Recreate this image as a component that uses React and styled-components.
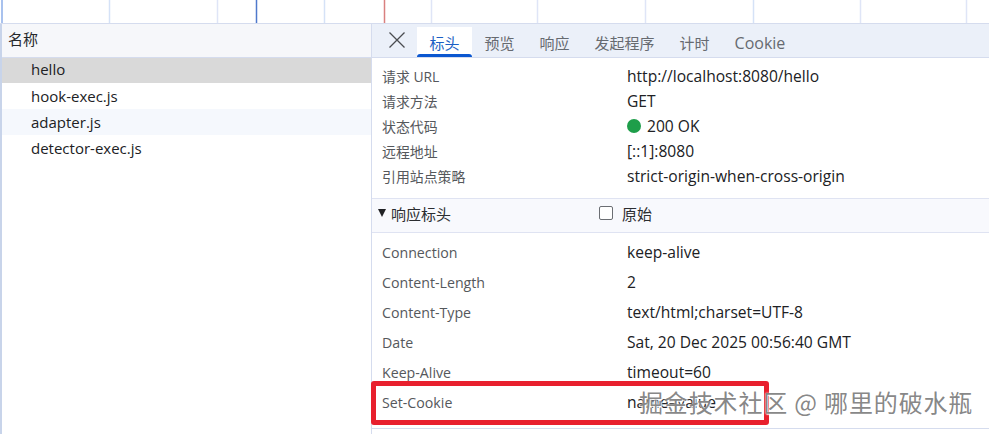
import React from 'react'
import styled, { createGlobalStyle } from 'styled-components'

const GlobalStyle = createGlobalStyle`
  html, body {
    margin: 0;
    padding: 0;
    background: #fff;
  }
  body {
    font-family: 'Open Sans', 'Noto Sans CJK SC', sans-serif;
    overflow: hidden;
  }
`

const Page = styled.div`
  position: relative;
  width: 989px;
  height: 434px;
  overflow: hidden;
  display: flex;
  flex-direction: column;
  color: #303134;
`

const Timeline = styled.svg`
  display: block;
  flex: none;
  width: 989px;
  height: 24px;
`

const Split = styled.div`
  flex: 1;
  display: flex;
  min-height: 0;
  border-left: 2px solid #c8d4ea;
`

const NamePanel = styled.div`
  flex: none;
  width: 369px;
  display: flex;
  flex-direction: column;
`

const NameHeader = styled.div`
  height: 34px;
  box-sizing: border-box;
  padding: 0 0 5px 6px;
  display: flex;
  align-items: center;
  background: #f6f7fa;
  border-bottom: 1px solid #d5dcee;
  font-size: 15px;
  color: #26282b;
`

const FileRow = styled.div`
  height: ${p => (p.$selected ? '25px' : '26px')};
  box-sizing: border-box;
  padding: 0 0 ${p => (p.$selected ? '3px' : '0')} 29px;
  display: flex;
  align-items: center;
  font-size: 15px;
  color: #202124;
  background: ${p => (p.$selected ? '#d9d9d9' : p.$striped ? '#f5f8fd' : '#fff')};
`

const DetailPanel = styled.div`
  flex: 1;
  display: flex;
  flex-direction: column;
  border-left: 1px solid #d5dcee;
  min-width: 0;
`

const TabBar = styled.div`
  height: 34px;
  flex: none;
  box-sizing: border-box;
  display: flex;
  background: #ebf0f9;
  border-bottom: 1px solid #d5dcee;
  padding-top: 3px;
`

const CloseButton = styled.div`
  width: 45px;
  height: 26px;
  display: flex;
  align-items: center;
  justify-content: center;
  color: #4a4c50;
  padding-left: 5px;
  box-sizing: border-box;
`

const Tab = styled.div`
  position: relative;
  height: 30px;
  padding: 4px 12.5px 0;
  box-sizing: border-box;
  font-size: ${p => (p.$latin ? '16px' : '15px')};
  line-height: 24px;
  color: ${p => (p.$active ? '#1b5fc4' : '#666a70')};
  background: ${p => (p.$active ? '#fff' : 'transparent')};

  &::after {
    content: '';
    display: ${p => (p.$active ? 'block' : 'none')};
    position: absolute;
    left: 0;
    right: 0;
    bottom: 0;
    height: 3px;
    border-radius: 3px 3px 0 0;
    background: #0b57d0;
  }
`

const Section = styled.div`
  display: flex;
  flex-direction: column;
  padding: ${p => p.$padding};
`

const HeaderRow = styled.div`
  height: ${p => p.$height}px;
  display: grid;
  grid-template-columns: 245px 1fr;
  padding-left: 10px;
  align-items: center;
`

const HeaderName = styled.div`
  color: #55585c;
  font-size: ${p => p.$size}px;
`

const HeaderValue = styled.div`
  display: flex;
  align-items: center;
  gap: 6px;
  color: #202124;
  font-size: 15.6px;
  white-space: nowrap;
`

const StatusDot = styled.span`
  width: 14px;
  height: 14px;
  border-radius: 50%;
  background: #1e9e4a;
`

const SectionTitle = styled.div`
  height: 35px;
  flex: none;
  box-sizing: border-box;
  display: grid;
  grid-template-columns: 221px 1fr;
  align-items: center;
  padding: 0 0 5px 6px;
  background: #f8f9fd;
  border-top: 1px solid #dfe3f2;
  border-bottom: 1px solid #dfe3f2;
  font-size: 15px;
  color: #2b2d30;
`

const TitleLabel = styled.div`
  display: flex;
  align-items: center;
  gap: 5px;
`

const Caret = styled.span`
  width: 0;
  height: 0;
  border-left: 4.5px solid transparent;
  border-right: 4.5px solid transparent;
  border-top: 8px solid #202124;
`

const RawToggle = styled.div`
  display: flex;
  align-items: center;
  gap: 9px;
`

const Checkbox = styled.span`
  width: 12px;
  height: 12px;
  border: 1px solid #6b6e73;
  border-radius: 2px;
  background: #fff;
`

const BottomRule = styled.div`
  position: absolute;
  left: 372px;
  right: 0;
  top: 428px;
  height: 1px;
  background: #d5dcee;
`

const Highlight = styled.div`
  position: absolute;
  left: 371px;
  top: 381px;
  width: 398px;
  height: 44px;
  box-sizing: border-box;
  border: 5px solid #e8202e;
  border-radius: 3px;
`

const Watermark = styled.div`
  position: absolute;
  left: 639px;
  top: 386px;
  font-family: 'Noto Sans CJK SC', sans-serif;
  font-size: 24px;
  line-height: 32px;
  white-space: nowrap;
  letter-spacing: 0.85px;
  color: rgba(120, 120, 120, 0.9);
  text-shadow: 0 0 2px #fff, 1px 1px 1px rgba(255, 255, 255, 0.9);
`

const gridLines = [
  { x: 109, color: '#d5e2f7' },
  { x: 217, color: '#dfe5f7' },
  { x: 256, color: '#4f79cc' },
  { x: 324, color: '#d5e2f7' },
  { x: 384, color: '#d9807f' },
  { x: 431, color: '#dfe5f7' },
  { x: 537, color: '#dfe5f7' },
  { x: 645, color: '#dfe5f7' },
  { x: 753, color: '#d5e2f7' },
  { x: 860, color: '#dfe5f7' },
  { x: 966, color: '#dfe5f7' },
]

const tabs = ['预览', '响应', '发起程序', '计时']

const general = [
  ['请求 URL', 'http://localhost:8080/hello'],
  ['请求方法', 'GET'],
  ['状态代码', '200 OK', true],
  ['远程地址', '[::1]:8080'],
  ['引用站点策略', 'strict-origin-when-cross-origin'],
]

const response = [
  ['Connection', 'keep-alive'],
  ['Content-Length', '2'],
  ['Content-Type', 'text/html;charset=UTF-8'],
  ['Date', 'Sat, 20 Dec 2025 00:56:40 GMT'],
  ['Keep-Alive', 'timeout=60'],
  ['Set-Cookie', 'name=value'],
]

const files = ['hello', 'hook-exec.js', 'adapter.js', 'detector-exec.js']

const Row = ({ height, size, name, value, status }) => (
  <HeaderRow $height={height}>
    <HeaderName $size={size}>{name}</HeaderName>
    <HeaderValue>
      {status && <StatusDot />}
      {value}
    </HeaderValue>
  </HeaderRow>
)

export default function App() {
  return (
    <Page>
      <GlobalStyle />
      <Timeline viewBox="0 0 989 24">
        <rect x="0" y="23" width="989" height="1" fill="#d5dcee" />
        <rect x="1" y="0" width="2" height="23" fill="#a9c2ee" />
        {gridLines.map(line => (
          <rect key={line.x} x={line.x - 0.25} y="0" width="1.5" height="23" fill={line.color} />
        ))}
      </Timeline>
      <Split>
        <NamePanel>
          <NameHeader>名称</NameHeader>
          {files.map((file, i) => (
            <FileRow key={file} $selected={i === 0} $striped={i === 2}>
              {file}
            </FileRow>
          ))}
        </NamePanel>
        <DetailPanel>
          <TabBar>
            <CloseButton>
              <svg width="16" height="16" viewBox="0 0 16 16" fill="none" stroke="currentColor" strokeWidth="1.3">
                <path d="M0.5 0.5L15.5 15.5M15.5 0.5L0.5 15.5" />
              </svg>
            </CloseButton>
            <Tab $active>标头</Tab>
            {tabs.map(tab => (
              <Tab key={tab}>{tab}</Tab>
            ))}
            <Tab $latin>Cookie</Tab>
          </TabBar>
          <Section $padding="5px 0 10px">
            {general.map(([name, value, status]) => (
              <Row key={name} height={25} size={13.9} name={name} value={value} status={status} />
            ))}
          </Section>
          <SectionTitle>
            <TitleLabel>
              <Caret />
              响应标头
            </TitleLabel>
            <RawToggle>
              <Checkbox />
              原始
            </RawToggle>
          </SectionTitle>
          <Section $padding="4px 0 0">
            {response.map(([name, value]) => (
              <Row key={name} height={30} size={14.2} name={name} value={value} />
            ))}
          </Section>
        </DetailPanel>
      </Split>
      <BottomRule />
      <Highlight />
      <Watermark>掘金技术社区 @ 哪里的破水瓶</Watermark>
    </Page>
  )
}
